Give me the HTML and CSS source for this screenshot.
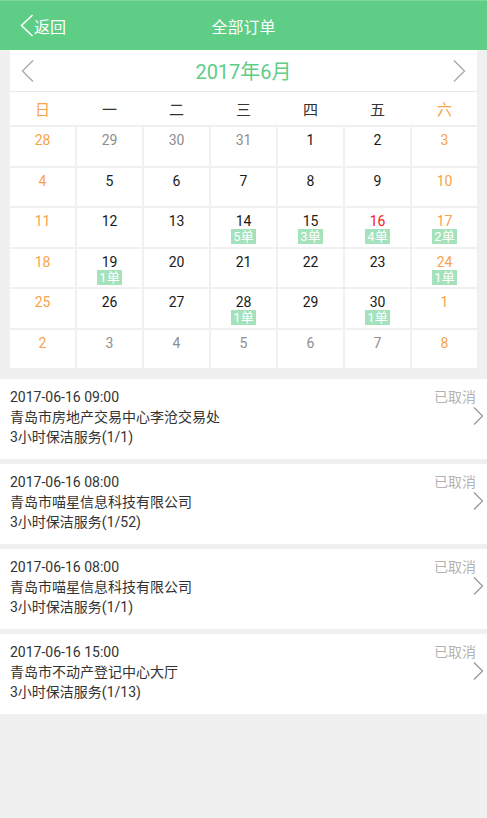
FILE: index.html
```html
<!DOCTYPE html>
<html lang="zh-CN">
<head>
  <meta charset="UTF-8" />
  <meta name="viewport" content="width=device-width, initial-scale=1.0"/>
  <title>全部订单</title>
  <link rel="stylesheet" href="styles.css">
</head>
<body>

  <header>
    <a class="back" href="#">
      <svg width="14" height="23" viewBox="0 0 14 23"><polyline points="12.5,1 1.5,11.5 12.5,22" fill="none" stroke="#fff" stroke-width="1.6"/></svg>
      <span>返回</span>
    </a>
    <h2>全部订单</h2>
    <span></span>
  </header>

  <div class="calendar">
    <div class="month-bar">
      <svg width="13" height="22" viewBox="0 0 13 22"><polyline points="12,0.5 1.5,11 12,21.5" fill="none" stroke="#aaa" stroke-width="1.4"/></svg>
      <span class="month">2017年6月</span>
      <svg width="13" height="22" viewBox="0 0 13 22"><polyline points="1,0.5 11.5,11 1,21.5" fill="none" stroke="#aaa" stroke-width="1.4"/></svg>
    </div>

    <div class="weekdays">
      <span class="weekend">日</span>
      <span>一</span>
      <span>二</span>
      <span>三</span>
      <span>四</span>
      <span>五</span>
      <span class="weekend">六</span>
    </div>

    <div class="days">
      <div class="day weekend">28</div>
      <div class="day other">29</div>
      <div class="day other">30</div>
      <div class="day other">31</div>
      <div class="day">1</div>
      <div class="day">2</div>
      <div class="day weekend">3</div>

      <div class="day weekend">4</div>
      <div class="day">5</div>
      <div class="day">6</div>
      <div class="day">7</div>
      <div class="day">8</div>
      <div class="day">9</div>
      <div class="day weekend">10</div>

      <div class="day weekend">11</div>
      <div class="day">12</div>
      <div class="day">13</div>
      <div class="day">14<span class="badge">5单</span></div>
      <div class="day">15<span class="badge">3单</span></div>
      <div class="day today">16<span class="badge">4单</span></div>
      <div class="day weekend">17<span class="badge">2单</span></div>

      <div class="day weekend">18</div>
      <div class="day">19<span class="badge">1单</span></div>
      <div class="day">20</div>
      <div class="day">21</div>
      <div class="day">22</div>
      <div class="day">23</div>
      <div class="day weekend">24<span class="badge">1单</span></div>

      <div class="day weekend">25</div>
      <div class="day">26</div>
      <div class="day">27</div>
      <div class="day">28<span class="badge">1单</span></div>
      <div class="day">29</div>
      <div class="day">30<span class="badge">1单</span></div>
      <div class="day weekend">1</div>

      <div class="day weekend">2</div>
      <div class="day other">3</div>
      <div class="day other">4</div>
      <div class="day other">5</div>
      <div class="day other">6</div>
      <div class="day other">7</div>
      <div class="day weekend">8</div>
    </div>
  </div>

  <div class="orders">
    <div class="order">
      <div class="info">
        <p>2017-06-16 09:00</p>
        <p>青岛市房地产交易中心李沧交易处</p>
        <p>3小时保洁服务(1/1)</p>
      </div>
      <div class="side">
        <span class="status">已取消</span>
        <svg width="11" height="18" viewBox="0 0 11 18"><polyline points="1,0.5 9.5,9 1,17.5" fill="none" stroke="#999" stroke-width="1.3"/></svg>
      </div>
    </div>

    <div class="order">
      <div class="info">
        <p>2017-06-16 08:00</p>
        <p>青岛市喵星信息科技有限公司</p>
        <p>3小时保洁服务(1/52)</p>
      </div>
      <div class="side">
        <span class="status">已取消</span>
        <svg width="11" height="18" viewBox="0 0 11 18"><polyline points="1,0.5 9.5,9 1,17.5" fill="none" stroke="#999" stroke-width="1.3"/></svg>
      </div>
    </div>

    <div class="order">
      <div class="info">
        <p>2017-06-16 08:00</p>
        <p>青岛市喵星信息科技有限公司</p>
        <p>3小时保洁服务(1/1)</p>
      </div>
      <div class="side">
        <span class="status">已取消</span>
        <svg width="11" height="18" viewBox="0 0 11 18"><polyline points="1,0.5 9.5,9 1,17.5" fill="none" stroke="#999" stroke-width="1.3"/></svg>
      </div>
    </div>

    <div class="order">
      <div class="info">
        <p>2017-06-16 15:00</p>
        <p>青岛市不动产登记中心大厅</p>
        <p>3小时保洁服务(1/13)</p>
      </div>
      <div class="side">
        <span class="status">已取消</span>
        <svg width="11" height="18" viewBox="0 0 11 18"><polyline points="1,0.5 9.5,9 1,17.5" fill="none" stroke="#999" stroke-width="1.3"/></svg>
      </div>
    </div>
  </div>

</body>
</html>
```

FILE: styles.css
```css
body {
  margin: 0;
  font-family: Roboto, "Noto Sans CJK SC", sans-serif;
  background: #eff0ef;
  color: #333;
}
header {
  background-color: #5ecd85;
  border-top: 1px solid #80d89e;
  height: 49px;
  display: grid;
  grid-template-columns: 1fr auto 1fr;
  align-items: center;
  color: white;
}
header h2 {
  margin: 0;
  font-size: 16px;
  font-weight: normal;
}
.back {
  display: flex;
  align-items: center;
  padding-left: 20px;
  color: white;
  text-decoration: none;
  font-size: 16px;
}
.back svg {
  margin-right: 0;
}
.calendar {
  margin: 0 10px;
}
.month-bar {
  background: white;
  height: 41px;
  border-bottom: 1px solid #e8e8e8;
  display: flex;
  justify-content: space-between;
  align-items: center;
  padding: 0 11px;
}
.month {
  color: #5ecd85;
  font-size: 20px;
}
.weekdays {
  background: white;
  height: 33px;
  display: grid;
  grid-template-columns: repeat(7, 1fr);
  column-gap: 2px;
  align-items: center;
  text-align: center;
  font-size: 15px;
  color: #333;
}
.weekdays .weekend {
  color: #f7a34c;
}
.days {
  margin-top: 2px;
  display: grid;
  grid-template-columns: repeat(7, 1fr);
  grid-auto-rows: 38.5px;
  gap: 2px;
}
.day {
  background: white;
  display: flex;
  flex-direction: column;
  align-items: center;
  padding-top: 6px;
  line-height: 15px;
  font-size: 14px;
  color: #1a1a1a;
}
.day.weekend {
  color: #f7a34c;
}
.day.other {
  color: #8e8e8e;
}
.day.today {
  color: #f21c1c;
}
.badge {
  background: #a4e2bc;
  color: white;
  font-size: 13px;
  line-height: 15px;
  padding: 0 2px;
}
.orders {
  margin-top: 11px;
}
.order {
  background: white;
  height: 80px;
  margin-bottom: 5px;
  display: flex;
  justify-content: space-between;
  box-sizing: border-box;
  padding: 8px 3px 0 10px;
}
.info p {
  margin: 0;
  font-size: 14px;
  line-height: 20px;
  color: #333;
}
.side {
  display: flex;
  flex-direction: column;
  align-items: flex-end;
}
.status {
  font-size: 14px;
  line-height: 20px;
  color: #b3b3b3;
  margin-right: 8px;
}
```
